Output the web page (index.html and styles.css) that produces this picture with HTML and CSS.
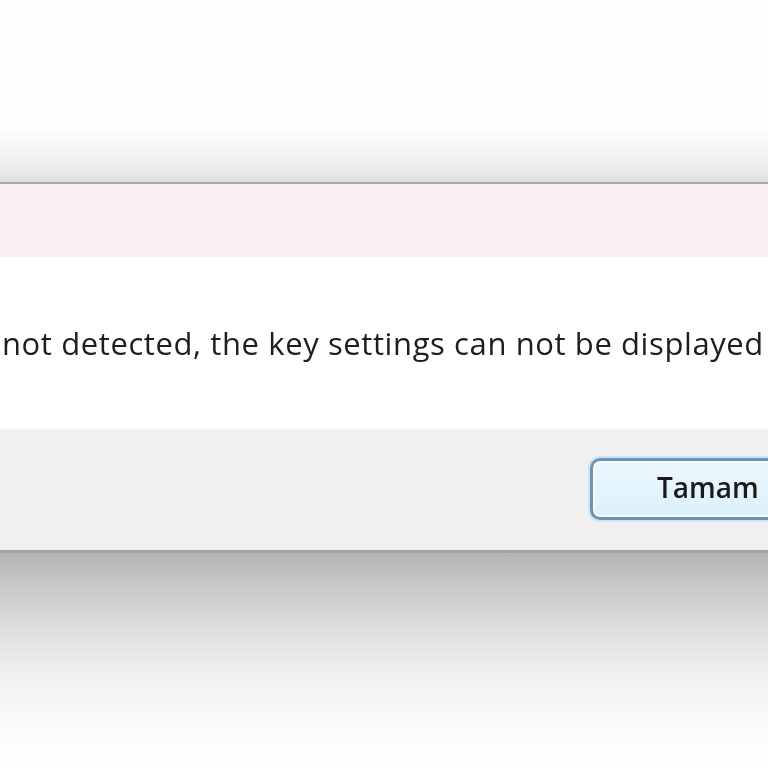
FILE: index.html
```html
<!DOCTYPE html>
<html>
<head>
<meta charset="utf-8">
<link rel="stylesheet" href="styles.css">
</head>
<body>
<div class="page">
  <div class="space-top"></div>
  <div class="shadow-top"></div>
  <div class="dialog">
    <div class="titlebar"></div>
    <div class="content">
      <p class="message">not detected, the key settings can not be displayed</p>
    </div>
    <div class="footer">
      <button class="btn">Tamam</button>
    </div>
  </div>
  <div class="shadow-bottom"></div>
</div>
</body>
</html>
```
FILE: styles.css
```css
html, body {
  margin: 0;
  padding: 0;
  background: #ffffff;
  overflow: hidden;
}
.page {
  width: 768px;
  height: 768px;
  overflow: hidden;
  display: flex;
  flex-direction: column;
}
.space-top {
  height: 128px;
  flex: none;
  background: #fefefe;
}
.shadow-top {
  height: 54px;
  flex: none;
  background: linear-gradient(#fdfdfd 0%, #f5f5f5 40%, #e8e8e8 85%, #dcdcdc 100%);
}
.dialog {
  flex: none;
  width: 800px;
  border-top: 2px solid #a9a9ab;
  border-bottom: 3px solid #a2a2a2;
  background: #ffffff;
}
.titlebar {
  height: 72px;
  background: #f9eff1;
  border-bottom: 1px solid #f7f3f4;
}
.content {
  height: 172px;
  display: flex;
  align-items: center;
  background: #ffffff;
}
.message {
  margin: 0;
  padding: 0 0 0 2px;
  white-space: nowrap;
  font-family: "Open Sans", "Noto Sans", sans-serif;
  font-size: 31px;
  font-weight: 400;
  letter-spacing: 0.6px;
  color: #1e1e1e;
  filter: blur(0.6px);
}
.footer {
  height: 120px;
  background: #f0f0f0;
  border-top: 1px solid #f6f6f6;
  display: flex;
  align-items: center;
  justify-content: flex-end;
}
.btn {
  width: 220px;
  height: 62px;
  margin-right: -10px;
  margin-top: -2px;
  border: 3px solid #6f93ad;
  border-radius: 10px;
  background: linear-gradient(#ecf7fd, #dcf0fb);
  box-shadow: 0 0 0 2px #c8e6f8, inset 0 0 0 2px #f4fbff;
  font-family: "Open Sans", "Noto Sans", sans-serif;
  font-size: 28px;
  font-weight: 600;
  letter-spacing: 0;
  color: #1a1a1a;
  text-align: left;
  padding: 0 0 4px 64px;
  filter: blur(0.6px);
}
.shadow-bottom {
  flex: 1;
  background: linear-gradient(#b3b3b3 0%, #c8c8c8 15%, #dedede 35%, #efefef 55%, #f9f9f9 75%, #ffffff 100%);
}
```
